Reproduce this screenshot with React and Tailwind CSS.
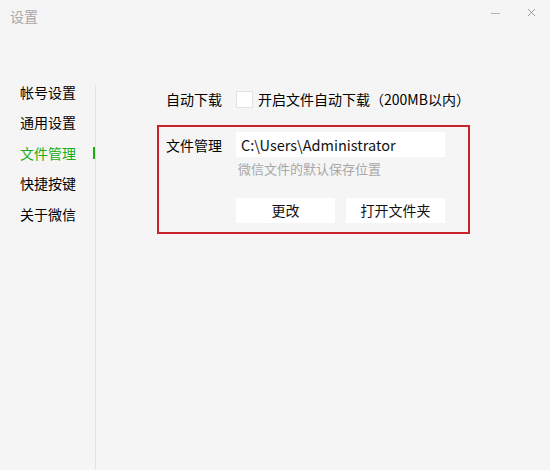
const navItems = ["帐号设置", "通用设置", "文件管理", "快捷按键", "关于微信"];

function Sidebar({ active }) {
  return (
    <div className="flex w-[96px] shrink-0">
      <ul className="w-[95px]">
        {navItems.map((item) => (
          <li
            key={item}
            className={
              "flex h-[30.5px] items-center justify-between pl-[20px] text-[14px] " +
              (item === active ? "text-[#1aad19]" : "text-[#000]")
            }
          >
            <span>{item}</span>
            {item === active && <span className="mr-[-1px] h-[12px] w-[3px] bg-[#1aad19]" />}
          </li>
        ))}
      </ul>
      <div className="mt-[8px] w-px bg-[#e3e3e3]" />
    </div>
  );
}

export default function App() {
  return (
    <div
      className="flex h-[470px] w-[550px] flex-col overflow-hidden bg-[#f5f5f5] text-[#000]"
      style={{ fontFamily: '"Noto Sans CJK SC", "Noto Sans", sans-serif' }}
    >
      {/* title bar */}
      <div className="flex h-[77px] shrink-0 items-start justify-between pl-[10px] pr-[14px] pt-[6px]">
        <span className="text-[14px] leading-[20px] text-[#a8a8a8]">设置</span>
        <div className="flex items-center gap-[26px] pt-[1px]">
          <svg width="11" height="11" viewBox="0 0 11 11">
            <line x1="1" y1="6.5" x2="10" y2="6.5" stroke="#b5b5b5" strokeWidth="1" />
          </svg>
          <svg width="9" height="9" viewBox="0 0 9 9">
            <path d="M1 1 L8 8 M8 1 L1 8" stroke="#9a9a9a" strokeWidth="1" fill="none" />
          </svg>
        </div>
      </div>

      <div className="flex flex-1">
        <Sidebar active="文件管理" />

        <div className="flex-1 pl-[61px] pt-[13px]">
          {/* auto download */}
          <div className="flex h-[19px] items-center pl-[9px] text-[14px]">
            <span className="w-[70px]">自动下载</span>
            <span className="h-[17px] w-[17px] border border-[#e2e2e2] bg-white" />
            <span className="ml-[5px]">开启文件自动下载（200MB以内）</span>
          </div>

          {/* file management, outlined in red */}
          <div className="mt-[16px] h-[109px] w-[313px] border-2 border-[#c8232c] pl-[7px] pt-[5px]">
            <div className="flex">
              <span className="w-[70px] pt-[3px] text-[14px] leading-[20px]">文件管理</span>
              <div className="flex flex-col">
                <div className="flex h-[25px] w-[209px] items-center bg-white pl-[5px] text-[14.5px] text-[#111]">
                  C:\Users\Administrator
                </div>
                <span className="mt-[2px] pl-[2px] text-[13px] leading-[20px] text-[#a8a8a8]">
                  微信文件的默认保存位置
                </span>
                <div className="mt-[19px] flex gap-[11px]">
                  <button className="flex h-[25px] w-[99px] items-center justify-center bg-white text-[14px] text-[#111]">
                    更改
                  </button>
                  <button className="flex h-[25px] w-[99px] items-center justify-center bg-white text-[14px] text-[#111]">
                    打开文件夹
                  </button>
                </div>
              </div>
            </div>
          </div>
        </div>
      </div>
    </div>
  );
}
